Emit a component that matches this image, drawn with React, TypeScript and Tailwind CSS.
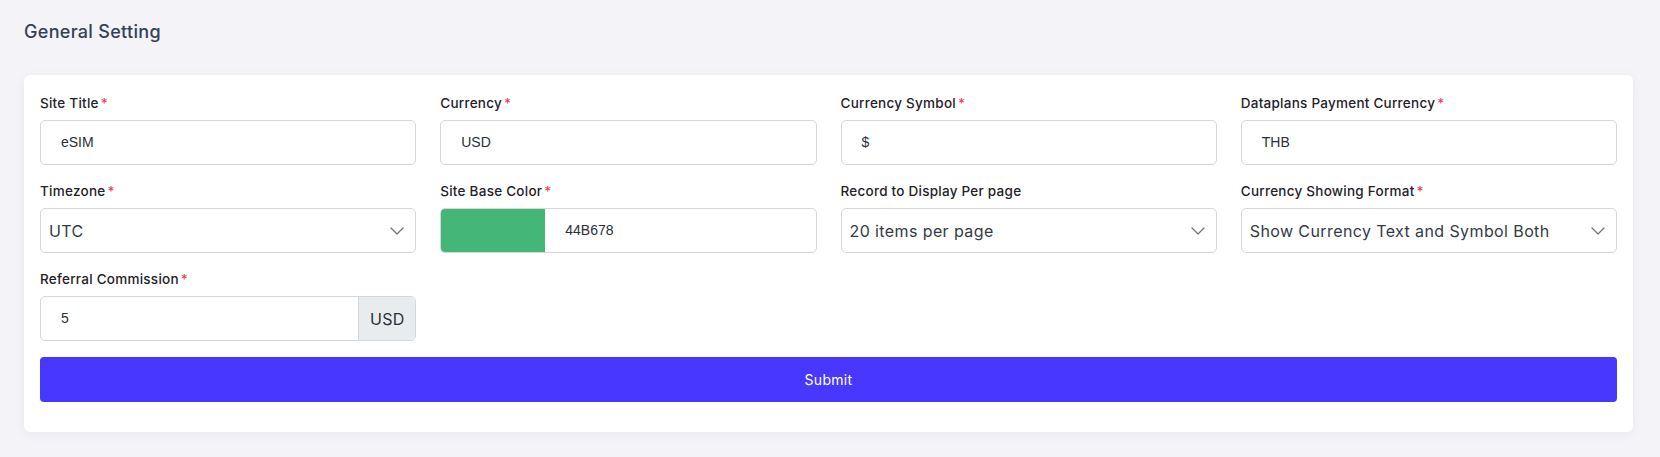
const font = { fontFamily: "Inter, 'Noto Sans', sans-serif" };

const Label = ({ text, required = true }: { text: string; required?: boolean }) => (
  <label className="mb-[7px] block text-[13.5px] font-medium leading-5 tracking-[0.25px] text-[#1f2229]">
    {text}
    {required && <span className="ml-0.5 text-[#e8425a]">*</span>}
  </label>
);

const TextInput = ({ value }: { value: string }) => (
  <div className="flex h-[45px] items-center rounded-[5px] border border-[#d3d7de] bg-white pl-5 font-['Liberation_Sans',Arial,sans-serif] text-[14px] text-[#2b2f36]">
    {value}
  </div>
);

const Chevron = () => (
  <svg width="14" height="8" viewBox="0 0 14 8" fill="none" className="text-[#6b7280]">
    <path d="M1 1l6 6 6-6" stroke="currentColor" strokeWidth="1.2" strokeLinecap="round" strokeLinejoin="round" />
  </svg>
);

const SelectBox = ({ value }: { value: string }) => (
  <div className="flex h-[45px] items-center justify-between rounded-[5px] border border-[#d3d7de] bg-white pl-2 pr-[11px] text-[16px] tracking-[0.4px] text-[#343a44]">
    <span>{value}</span>
    <Chevron />
  </div>
);

const App = () => {
  return (
    <div className="min-h-screen bg-[#f3f3f8] pl-6 pr-[27px] pt-[20px] pb-6" style={font}>
      <h1 className="text-[18px] font-medium leading-6 tracking-[0.3px] text-[#334155]">General Setting</h1>

      <div className="mt-[31px] rounded-md bg-white px-4 pt-[18px] pb-[30px] shadow-[0_2px_12px_rgba(30,30,80,0.05)]">
        <div className="grid grid-cols-4 gap-x-6 gap-y-4">
          <div>
            <Label text="Site Title" />
            <TextInput value="eSIM" />
          </div>
          <div>
            <Label text="Currency" />
            <TextInput value="USD" />
          </div>
          <div>
            <Label text="Currency Symbol" />
            <TextInput value="$" />
          </div>
          <div>
            <Label text="Dataplans Payment Currency" />
            <TextInput value="THB" />
          </div>

          <div>
            <Label text="Timezone" />
            <SelectBox value="UTC" />
          </div>
          <div>
            <Label text="Site Base Color" />
            <div className="flex h-[45px] overflow-hidden rounded-[5px] border border-[#d3d7de] bg-white">
              <div className="w-[104px] bg-[#44b678]" />
              <div className="flex items-center pl-5 font-['Liberation_Sans',Arial,sans-serif] text-[14px] text-[#2b2f36]">
                44B678
              </div>
            </div>
          </div>
          <div>
            <Label text="Record to Display Per page" required={false} />
            <SelectBox value="20 items per page" />
          </div>
          <div>
            <Label text="Currency Showing Format" />
            <SelectBox value="Show Currency Text and Symbol Both" />
          </div>

          <div>
            <Label text="Referral Commission" />
            <div className="flex h-[45px] overflow-hidden rounded-[5px] border border-[#d3d7de] bg-white">
              <div className="flex flex-1 items-center pl-5 font-['Liberation_Sans',Arial,sans-serif] text-[14px] text-[#2b2f36]">
                5
              </div>
              <div className="flex w-[57px] items-center justify-center border-l border-[#d3d7de] bg-[#e9ecef] text-[16px] tracking-[0.3px] text-[#2b2f36]">
                USD
              </div>
            </div>
          </div>
        </div>

        <button className="mt-4 flex h-[45px] w-full items-center justify-center rounded-[4px] bg-[#4837ff] text-[14px] tracking-[0.3px] text-white">
          Submit
        </button>
      </div>
    </div>
  );
};

export default App;
